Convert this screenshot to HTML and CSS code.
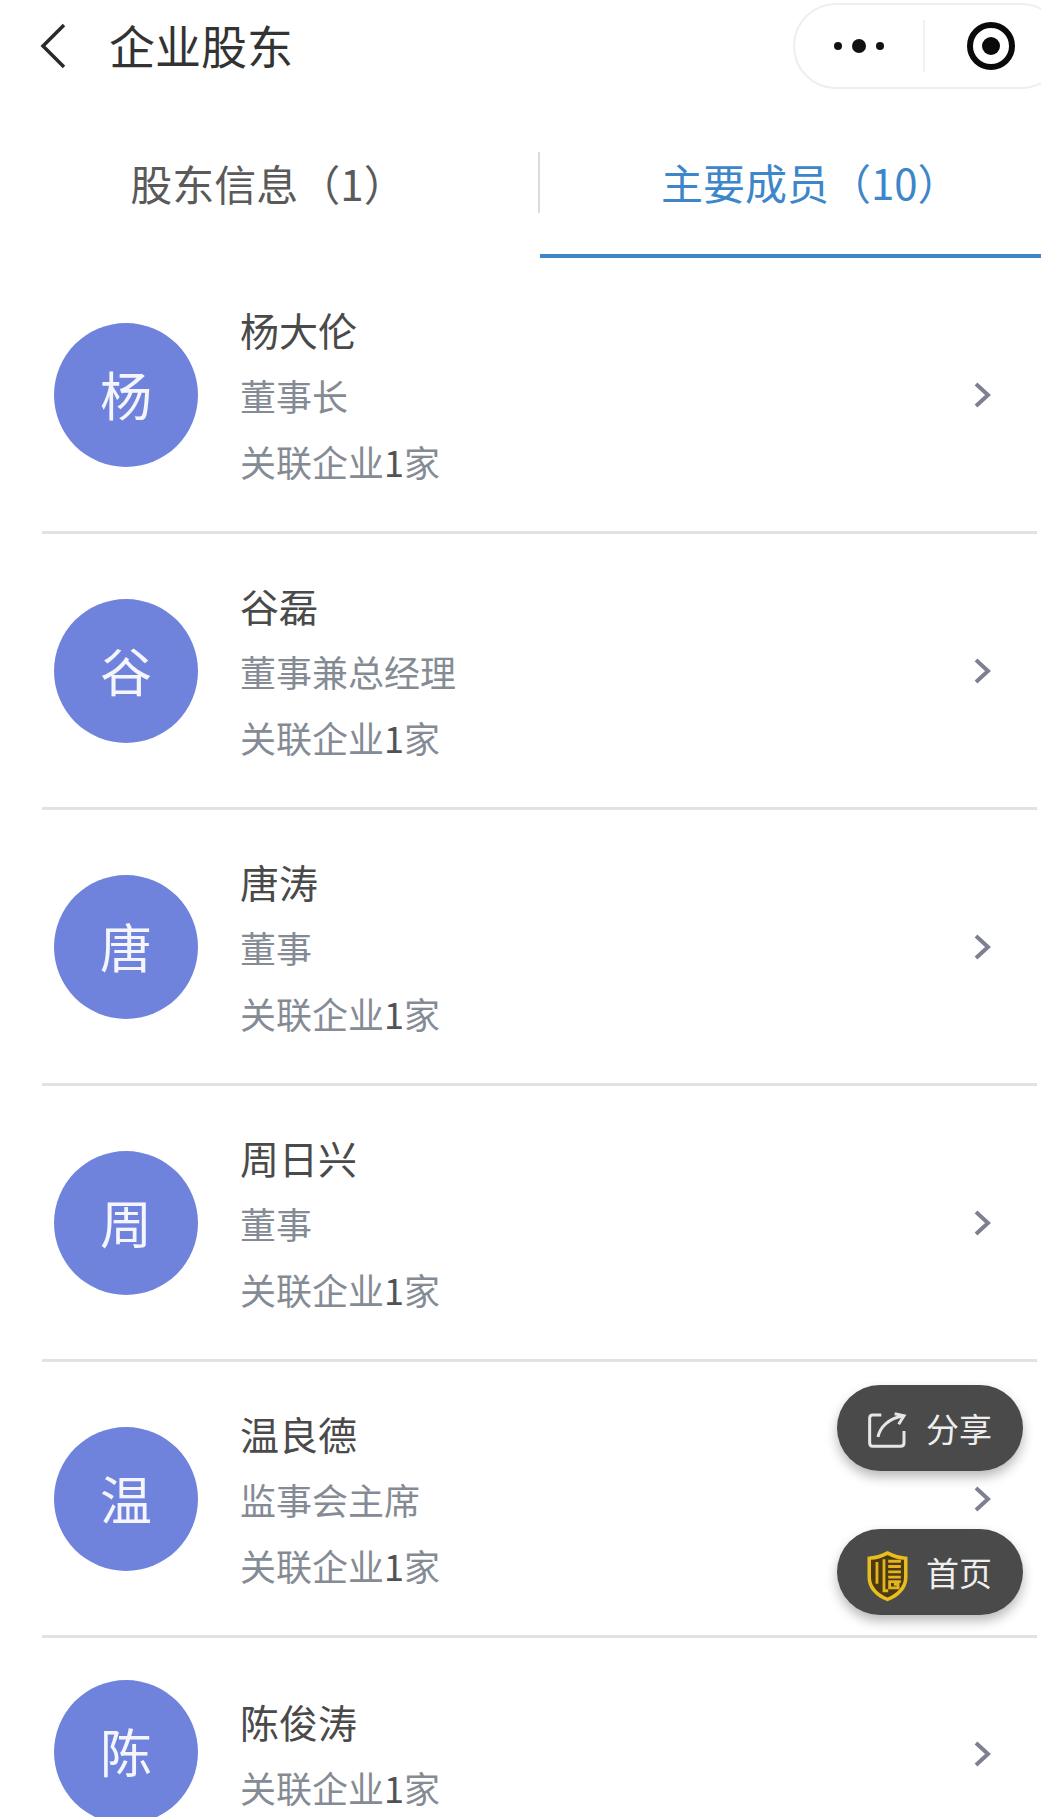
FILE: index.html
```html
<!DOCTYPE html>
<html lang="zh">
<head>
<meta charset="utf-8">
<title>企业股东</title>
<link rel="stylesheet" href="styles.css">
</head>
<body>
<div class="page">
  <header class="nav">
    <div class="nav-left">
      <svg class="back" viewBox="0 0 26 46"><path d="M24 2 L3 23 L24 44"/></svg>
      <h1 class="title">企业股东</h1>
    </div>
    <div class="capsule">
      <svg class="dots" viewBox="0 0 52 16"><circle cx="5" cy="8" r="4"/><circle cx="26" cy="8" r="7"/><circle cx="47" cy="8" r="4"/></svg>
      <span class="capsule-line"></span>
      <svg class="target" viewBox="0 0 50 50"><circle class="ring" cx="25" cy="25" r="21"/><circle cx="25" cy="25" r="9"/></svg>
    </div>
  </header>
  <nav class="tabs">
    <div class="tab">股东信息（1）</div>
    <div class="tab tab-active"><span>主要成员（10）</span></div>
  </nav>
  <main class="list">
    <section class="row">
      <div class="avatar">杨</div>
      <div class="info"><div class="name">杨大伦</div><div class="sub">董事长</div><div class="sub">关联企业<b>1</b>家</div></div>
      <svg class="chev" viewBox="0 0 18 28"><path d="M3 3 L15 14 L3 25"/></svg>
    </section>
    <section class="row">
      <div class="avatar">谷</div>
      <div class="info"><div class="name">谷磊</div><div class="sub">董事兼总经理</div><div class="sub">关联企业<b>1</b>家</div></div>
      <svg class="chev" viewBox="0 0 18 28"><path d="M3 3 L15 14 L3 25"/></svg>
    </section>
    <section class="row">
      <div class="avatar">唐</div>
      <div class="info"><div class="name">唐涛</div><div class="sub">董事</div><div class="sub">关联企业<b>1</b>家</div></div>
      <svg class="chev" viewBox="0 0 18 28"><path d="M3 3 L15 14 L3 25"/></svg>
    </section>
    <section class="row">
      <div class="avatar">周</div>
      <div class="info"><div class="name">周日兴</div><div class="sub">董事</div><div class="sub">关联企业<b>1</b>家</div></div>
      <svg class="chev" viewBox="0 0 18 28"><path d="M3 3 L15 14 L3 25"/></svg>
    </section>
    <section class="row">
      <div class="avatar">温</div>
      <div class="info"><div class="name">温良德</div><div class="sub">监事会主席</div><div class="sub">关联企业<b>1</b>家</div></div>
      <svg class="chev" viewBox="0 0 18 28"><path d="M3 3 L15 14 L3 25"/></svg>
    </section>
    <section class="row row-short">
      <div class="avatar">陈</div>
      <div class="info"><div class="name">陈俊涛</div><div class="sub">关联企业<b>1</b>家</div></div>
      <svg class="chev" viewBox="0 0 18 28"><path d="M3 3 L15 14 L3 25"/></svg>
    </section>
  </main>
  <div class="float-btn float-share">
    <svg class="share-ico" viewBox="0 0 120 105"><path d="M40 6 H14 Q5 6 5 15 V90 Q5 100 14 100 H98 Q108 100 108 90 V54"/><path d="M30 72 C36 42 62 16 106 8"/><path d="M80 2 L108 8 L92 34"/></svg>
    <span>分享</span>
  </div>
  <div class="float-btn float-home">
    <svg class="shield-ico" viewBox="0 0 120 148">
      <path class="sh-outer" d="M60 3 C78 13 97 18 117 19 V78 C117 110 92 134 60 146 C28 134 3 110 3 78 V19 C23 18 42 13 60 3 Z"/>
      <path class="sh-inner" d="M60 14 C76 23 92 27 107 28 V78 C107 104 86 124 60 135 C34 124 13 104 13 78 V28 C28 27 44 23 60 14 Z"/>
      <path class="sh-bar" d="M30 34 V96 M50 26 V116 H62 M62 32 H98 M62 47 H98 M62 62 H98 M62 77 H98 M98 90 H66 V108 H90 V98 H78"/>
    </svg>
    <span>首页</span>
  </div>
</div>
</body>
</html>
```
FILE: styles.css
```css
* { box-sizing: border-box; }
html, body { margin: 0; padding: 0; background: #fff; }
body { font-family: "Noto Sans CJK SC", "Noto Sans", sans-serif; }
.page { position: relative; width: 1041px; height: 1817px; overflow: hidden; background: #fff; }

.nav { display: flex; justify-content: space-between; align-items: flex-start; height: 90px; padding-top: 3px; }
.nav-left { display: flex; align-items: center; height: 86px; padding-left: 40px; }
.back { width: 26px; height: 46px; fill: none; stroke: #2a2a2a; stroke-width: 3.5; margin-right: 43px; }
.title { margin: 0 0 3px; font-size: 46px; font-weight: 400; color: #333; line-height: 83px; }
.capsule { display: flex; align-items: center; width: 271px; height: 86px; margin-right: -23px; padding-left: 38px; border: 2px solid #eeeeee; border-radius: 43px; flex: none; }
.dots { width: 52px; height: 16px; fill: #111; flex: none; }
.capsule-line { width: 2px; height: 52px; background: #f1f1f1; margin-left: 38px; flex: none; }
.target { width: 50px; height: 50px; margin-left: 41px; flex: none; }
.target circle { fill: #0a0a0a; }
.target .ring { fill: none; stroke: #0a0a0a; stroke-width: 6; }

.tabs { display: flex; height: 168px; position: relative; }
.tab { display: flex; align-items: center; justify-content: center; width: 540px; height: 168px; font-size: 42px; color: #5a5a5a; padding: 16px 4px 0 0; flex: none; position: relative; }
.tab::after { content: ""; position: absolute; right: 0; top: 62px; width: 2px; height: 61px; background: #dcdcdc; }
.tab-active { width: 501px; justify-content: flex-start; color: #3d86c9; border-bottom: 4px solid #3d86c9; padding: 18px 0 0 121px; }
.tab-active::after { display: none; }

.list { margin: 0 4px 0 42px; }
.row { display: flex; align-items: center; height: 276px; border-bottom: 3px solid #e2e2e2; padding: 0 46px 0 12px; }
.row-short { height: 232px; border-bottom: 0; }
.row-short .avatar { margin-bottom: 4px; }
.avatar { width: 144px; height: 144px; border-radius: 50%; background: #7083dc; color: #f4f5fd; font-size: 52px; line-height: 1; padding-bottom: 2px; display: flex; align-items: center; justify-content: center; flex: none; }
.info { flex: 1; margin-left: 42px; min-width: 0; }
.name { font-size: 39px; line-height: 66px; color: #4a4a4a; }
.sub { font-size: 36px; line-height: 66px; color: #858b94; }
.sub b { font-weight: 400; color: #4f5358; }
.chev { width: 18px; height: 28px; fill: none; stroke: #7c8090; stroke-width: 4; flex: none; }

.float-btn { position: absolute; left: 837px; width: 186px; height: 86px; border-radius: 43px; background: #4a4a4a; color: #eee; font-size: 33px; display: flex; align-items: center; box-shadow: 0 6px 12px rgba(0, 0, 0, .28); }
.float-btn span { position: absolute; left: 89px; line-height: 86px; }
.float-share { top: 1385px; }
.float-home { top: 1529px; }
.share-ico { position: absolute; left: 31px; top: 28px; width: 40px; height: 35px; fill: none; stroke: #e6e6e6; stroke-width: 9; overflow: visible; }
.shield-ico { position: absolute; left: 29px; top: 21px; width: 43px; height: 52px; }
.sh-outer { fill: #e8bd1e; }
.sh-inner { fill: #4b3a12; }
.sh-bar { fill: none; stroke: #e3b41f; stroke-width: 8; }
```
